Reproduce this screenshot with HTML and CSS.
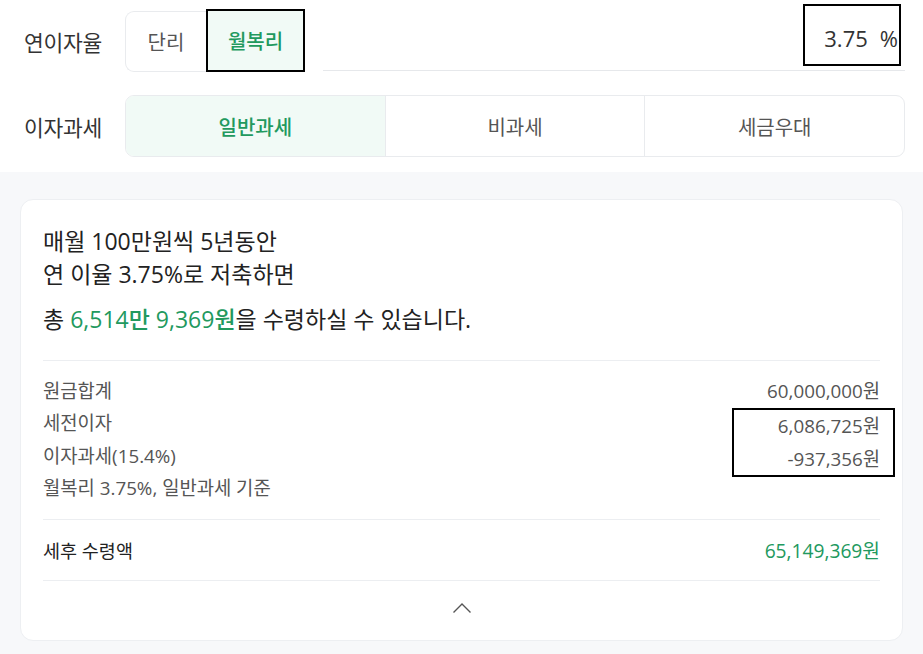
FILE: index.html
```html
<!DOCTYPE html>
<html lang="ko">
<head>
<meta charset="utf-8">
<link rel="stylesheet" href="styles.css">
</head>
<body>
<section class="options">
  <div class="opt-row">
    <div class="opt-label">연이자율</div>
    <div class="seg seg-small">
      <button class="seg-btn">단리</button>
      <button class="seg-btn active marked">월복리</button>
    </div>
    <div class="rate-input">
      <span class="rate-box"><span class="rate-val">3.75</span><span class="rate-unit">%</span></span>
    </div>
  </div>
  <div class="opt-row">
    <div class="opt-label">이자과세</div>
    <div class="seg seg-full">
      <button class="seg-btn active">일반과세</button>
      <button class="seg-btn">비과세</button>
      <button class="seg-btn">세금우대</button>
    </div>
  </div>
</section>
<section class="result-area">
  <div class="card">
    <div class="summary">
      <p class="sum-line">매월 100만원씩 5년동안</p>
      <p class="sum-line">연 이율 3.75%로 저축하면</p>
      <p class="sum-total">총 <strong class="green">6,514만 9,369원</strong>을 수령하실 수 있습니다.</p>
    </div>
    <div class="details">
      <div class="labels">
        <div class="d-row">원금합계</div>
        <div class="d-row">세전이자</div>
        <div class="d-row">이자과세(15.4%)</div>
        <div class="d-row">월복리 3.75%, 일반과세 기준</div>
      </div>
      <div class="values">
        <div class="d-row">60,000,000원</div>
        <div class="marked-group">
          <div class="d-row">6,086,725원</div>
          <div class="d-row">-937,356원</div>
        </div>
      </div>
    </div>
    <div class="final">
      <span class="final-label">세후 수령액</span>
      <span class="final-val">65,149,369원</span>
    </div>
    <div class="toggle">
      <svg width="20" height="12" viewBox="0 0 20 12"><path d="M1.5 10.5 L10 2 L18.5 10.5" fill="none" stroke="#555" stroke-width="1.4"/></svg>
    </div>
  </div>
</section>
</body>
</html>
```

FILE: styles.css
```css
* { box-sizing: border-box; }
html, body { margin: 0; padding: 0; }
body {
  font-family: "Open Sans", "Noto Sans CJK KR", sans-serif;
  color: #333;
  background: #f7f8fa;
  width: 923px;
  height: 654px;
  overflow: hidden;
}
button { font-family: inherit; }
p { margin: 0; }

.options {
  background: #fff;
  padding: 11px 18px 15px 24px;
  display: flex;
  flex-direction: column;
  gap: 23px;
}
.opt-row {
  display: flex;
  align-items: stretch;
  height: 61px;
}
.opt-row + .opt-row { height: 62px; }
.opt-label {
  width: 101px;
  display: flex;
  align-items: center;
  font-size: 21.5px;
  color: #333;
  letter-spacing: -0.3px;
}
.seg {
  display: flex;
  border: 1px solid #e9ebee;
  border-radius: 9px;
}
.seg-small {
  border-right: none;
  border-radius: 9px 0 0 9px;
}
.seg-btn {
  border: none;
  background: transparent;
  font-size: 20px;
  color: #555;
  padding: 0;
  display: flex;
  align-items: center;
  justify-content: center;
  cursor: pointer;
}
.seg-small .seg-btn:first-child { width: 80px; border-radius: 9px 0 0 9px; }
.seg-small .seg-btn.active { width: 99px; }
.seg-btn.active {
  background: #f1faf6;
  color: #22995e;
  font-weight: 500;
}
.seg-btn.marked {
  border: 2px solid #000;
  margin: -3px 0 -1px 0;
}
.seg-full { flex: 1; }
.seg-full .seg-btn { flex: 1; border-left: 1px solid #e9ebee; }
.seg-full .seg-btn:first-child { border-left: none; border-radius: 8px 0 0 8px; }
.seg-full .seg-btn.active { border-right: 1px solid #dcefe5; margin-right: -1px; }

.rate-input {
  flex: 1;
  margin-left: 18px;
  border-bottom: 1px solid #e6e8eb;
  display: flex;
  justify-content: flex-end;
  align-items: flex-start;
  margin-bottom: 1px;
}
.rate-box {
  margin-top: -7px;
  margin-right: 4px;
  width: 98px;
  height: 62px;
  border: 2px solid #000;
  display: flex;
  align-items: center;
  justify-content: flex-end;
  padding-right: 1px;
  padding-top: 6px;
  font-size: 22px;
  color: #333;
}
.rate-unit { margin-left: 12px; }

.result-area {
  padding: 27px 20px 13px 20px;
}
.card {
  background: #fff;
  border: 1px solid #edeff2;
  border-radius: 13px;
  width: 883px;
  height: 442px;
  padding: 0 22px;
}
.summary {
  padding-top: 25px;
  padding-bottom: 24px;
  border-bottom: 1px solid #eceef1;
}
.sum-line {
  font-size: 23px;
  line-height: 33px;
  color: #222;
}
.sum-total {
  margin-top: 12px;
  font-size: 23px;
  line-height: 33px;
  color: #222;
}
.green { color: #22995e; font-weight: 500; }
.details {
  display: flex;
  justify-content: space-between;
  padding: 14px 0 15px;
  border-bottom: 1px solid #eceef1;
  font-size: 18.8px;
  color: #555;
}
.d-row { line-height: 32.3px; height: 32.3px; white-space: nowrap; }
.values { text-align: right; }
.marked-group {
  border: 2px solid #000;
  width: 163px;
  margin-right: -15px;
  padding-right: 13px;
  margin-top: 1px;
  line-height: 32px;
}
.final {
  display: flex;
  justify-content: space-between;
  align-items: center;
  height: 61px;
  border-bottom: 1px solid #eceef1;
  font-size: 18.5px;
}
.final-label { color: #222; }
.final-val { color: #22995e; font-size: 19.2px; }
.toggle {
  height: 54px;
  display: flex;
  align-items: center;
  justify-content: center;
}
```
